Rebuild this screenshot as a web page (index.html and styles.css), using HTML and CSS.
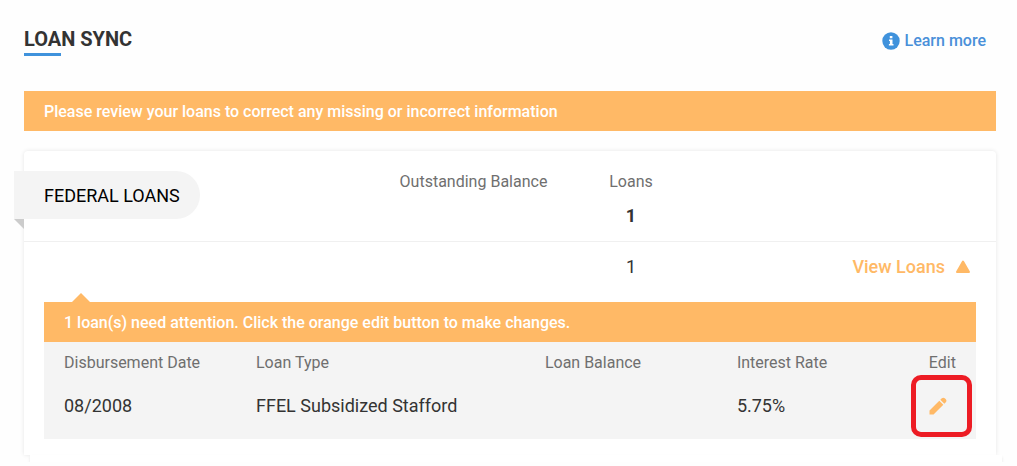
FILE: index.html
```html
<!DOCTYPE html>
<html lang="en">
<head>
    <meta charset="UTF-8">
    <meta name="viewport" content="width=device-width, initial-scale=1.0">
    <title>Loan Sync</title>
    <link rel="stylesheet" href="styles.css">
</head>
<body>
    <div class="page-header">
        <h1>LOAN SYNC</h1>
        <a href="#" class="learn-more">
            <svg width="18" height="18" viewBox="0 0 18 18" aria-hidden="true">
                <circle cx="9" cy="9" r="8.7" fill="#3f92dc"/>
                <path d="M7.8 4h2.6v2.3H7.8zM7 7.5h3.5v4.4h1v1.6H6.9v-1.6h1V9.1H7z" fill="#fff"/>
            </svg>
            Learn more
        </a>
    </div>

    <div class="alert">Please review your loans to correct any missing or incorrect information</div>

    <div class="card">
        <div class="summary-row">
            <h2 class="ribbon">FEDERAL LOANS</h2>
            <div class="stat">
                <div class="stat-label">Outstanding Balance</div>
            </div>
            <div class="stat">
                <div class="stat-label">Loans</div>
                <div class="stat-value">1</div>
            </div>
        </div>

        <div class="group-row">
            <div class="group-count">1</div>
            <button type="button" class="view-loans">
                View Loans
                <svg width="16" height="14" viewBox="0 0 16 14" aria-hidden="true">
                    <path d="M8 1.5L14 12H2z" fill="#ffb966" stroke="#ffb966" stroke-width="2" stroke-linejoin="round"/>
                </svg>
            </button>
        </div>

        <div class="loans">
            <div class="alert alert-arrow">1 loan(s) need attention. Click the orange edit button to make changes.</div>
            <table class="loans-table">
                <thead>
                    <tr>
                        <th class="col-date">Disbursement Date</th>
                        <th class="col-type">Loan Type</th>
                        <th class="col-balance">Loan Balance</th>
                        <th class="col-rate">Interest Rate</th>
                        <th class="col-edit">Edit</th>
                    </tr>
                </thead>
                <tbody>
                    <tr>
                        <td>08/2008</td>
                        <td>FFEL Subsidized Stafford</td>
                        <td></td>
                        <td>5.75%</td>
                        <td>
                            <button type="button" class="edit-btn" aria-label="Edit loan">
                                <svg width="18" height="18" viewBox="0 0 18 18" aria-hidden="true">
                                    <path d="M.5 13.6L10.3 3.8l4 4L4.5 17.5h-4zM11.3 2.8l1.5-1.5q1.5-1.3 3 0l1 1q1.3 1.5 0 3l-1.5 1.5z" fill="#ffb966"/>
                                </svg>
                            </button>
                        </td>
                    </tr>
                </tbody>
            </table>
        </div>
    </div>
    <div class="card-foot"></div>
</body>
</html>
```

FILE: styles.css
```css
*,
*::before,
*::after {
    margin: 0;
    padding: 0;
    box-sizing: border-box;
}

body {
    font-family: Roboto, 'Liberation Sans', sans-serif;
    font-size: 16px;
    line-height: 20px;
    background: #fefefe;
    color: #333;
    padding: 25px 21px 0 24px;
}

button {
    font: inherit;
    border: none;
    background: none;
    cursor: pointer;
}

.page-header {
    display: flex;
    justify-content: space-between;
    align-items: flex-start;
    padding-right: 10px;
    margin-bottom: 35px;
}

.page-header h1 {
    font-size: 20px;
    font-weight: 700;
    line-height: 28px;
}

.page-header h1::after {
    content: "";
    display: block;
    width: 37px;
    height: 3px;
    background: #3f92dc;
}

.learn-more {
    display: flex;
    align-items: center;
    gap: 5px;
    padding-top: 6px;
    font-weight: 500;
    color: #4a90d9;
    text-decoration: none;
}

.alert {
    padding: 11px 20px 9px;
    background: #ffb966;
    color: #fff;
    font-weight: 500;
}

.card {
    margin-top: 20px;
    padding-bottom: 16px;
    background: #fff;
    border-radius: 4px 4px 0 0;
    box-shadow: 0 0 4px rgba(0, 0, 0, 0.1);
}

.summary-row,
.group-row {
    display: grid;
    grid-template-columns: 355fr 189fr 126fr 302fr;
}

.summary-row {
    padding: 20px 0 13px;
    border-bottom: 1px solid #f0f0f0;
}

.ribbon {
    position: relative;
    justify-self: start;
    align-self: start;
    margin-left: -10px;
    padding: 1px 20px 0 30px;
    border-radius: 0 24px 24px 0;
    background: #f4f4f4;
    color: #000;
    font-size: 18px;
    font-weight: 400;
    line-height: 47px;
}

/* folded corner behind the card edge */
.ribbon::after {
    content: "";
    position: absolute;
    top: 100%;
    left: 0;
    border-top: 10px solid #ccc;
    border-left: 10px solid transparent;
}

.stat {
    padding-top: 1px;
    text-align: center;
}

.stat-label {
    color: #6f6f6f;
}

.stat-value {
    margin-top: 12px;
    font-size: 18px;
    font-weight: 700;
    line-height: 24px;
}

.group-row {
    align-items: center;
    height: 60px;
    padding-bottom: 10px;
}

.group-count {
    grid-column: 3;
    font-size: 18px;
    text-align: center;
}

.view-loans {
    display: flex;
    align-items: center;
    justify-self: end;
    gap: 10px;
    padding-right: 25px;
    color: #ffb966;
    font-size: 18px;
    font-weight: 500;
}

.loans {
    margin: 0 20px;
}

.alert-arrow {
    position: relative;
}

.alert-arrow::before {
    content: "";
    position: absolute;
    bottom: 100%;
    left: 28px;
    border: 9px solid transparent;
    border-top: none;
    border-bottom-color: #ffb966;
}

.loans-table {
    width: 100%;
    table-layout: fixed;
    border-collapse: collapse;
    background: #f4f4f4;
    text-align: left;
}

.loans-table th {
    padding: 11px 0 10px 20px;
    color: #6f6f6f;
    font-weight: 400;
}

.loans-table td {
    padding: 12px 0 22px 20px;
    font-size: 18px;
    line-height: 22px;
    vertical-align: top;
}

.col-date,
.col-balance,
.col-rate {
    width: 20.6%;
}

.col-type {
    width: 31%;
}

.edit-btn {
    position: relative;
    display: block;
    padding: 2px 0;
}

.edit-btn svg {
    display: block;
}

/* highlight ring */
.edit-btn::after {
    content: "";
    position: absolute;
    top: -20px;
    left: -18px;
    width: 61px;
    height: 62px;
    border: 5px solid #ed1c24;
    border-radius: 10px;
}

.card-foot {
    position: relative;
    height: 7px;
    margin: 0 -6px 0 6px;
    background: #fff;
    box-shadow: 0 2px 3px rgba(0, 0, 0, 0.1);
}
```
